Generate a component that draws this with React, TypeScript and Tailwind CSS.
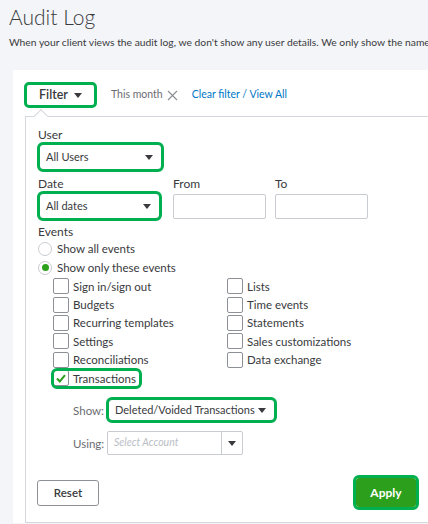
import React from 'react';

const font = { fontFamily: 'Lato, "Noto Sans", "Liberation Sans", sans-serif' };

// little filled down-arrow used by the select boxes
function Caret({ className = '' }: { className?: string }) {
  return (
    <svg width="8" height="5" viewBox="0 0 8 5" className={className}>
      <path d="M0 0 L8 0 L4 5 Z" fill="#393a3d" />
    </svg>
  );
}

function Select({ label, width, height }: { label: string; width: string; height: string }) {
  return (
    <div
      className={`flex items-center justify-between rounded-[4px] border border-[#babec5] bg-white pl-[6px] pr-[8px] outline-[3px] outline-[#00b050] outline-offset-[-1px] outline ${width} ${height}`}
    >
      <span className="whitespace-nowrap text-[11px] text-[#393a3d]">{label}</span>
      <Caret />
    </div>
  );
}

function Checkbox({ label, checked = false, highlight = false }: { label: string; checked?: boolean; highlight?: boolean }) {
  return (
    <div className="flex h-[18.4px] items-center">
      <div
        className={`flex items-center gap-[4px] pr-[4px] ${highlight ? 'rounded-[4px] outline outline-[3px] outline-[#00b050] outline-offset-[-1px]' : ''}`}
      >
        <span className="flex h-[16px] w-[16px] items-center justify-center rounded-[2px] border border-[#8d9096] bg-white">
          {checked && (
            <svg width="10" height="9" viewBox="0 0 10 9">
              <path d="M1 4.5 L3.8 7.4 L9 1.2" fill="none" stroke="#2ca01c" strokeWidth="2" />
            </svg>
          )}
        </span>
        <span className="text-[11.5px] text-[#393a3d]">{label}</span>
      </div>
    </div>
  );
}

function Radio({ label, checked = false }: { label: string; checked?: boolean }) {
  return (
    <div className="flex h-[19px] items-center gap-[5px]">
      <span className="flex h-[14px] w-[14px] items-center justify-center rounded-full border border-[#c8cbd0] bg-white">
        {checked && <span className="h-[7px] w-[7px] rounded-full bg-[#2ca01c]" />}
      </span>
      <span className="text-[11.5px] text-[#393a3d]">{label}</span>
    </div>
  );
}

const leftEvents = ['Sign in/sign out', 'Budgets', 'Recurring templates', 'Settings', 'Reconciliations'];
const rightEvents = ['Lists', 'Time events', 'Statements', 'Sales customizations', 'Data exchange'];

export default function App() {
  return (
    <div className="flex h-[524px] w-[428px] flex-col overflow-hidden bg-[#f4f5f8]" style={font}>
      <div className="pl-[9px] pt-[3px]">
        <h1 className="text-[21px] font-light leading-[28px] text-[#393a3d]">Audit Log</h1>
        <p className="mt-[4px] whitespace-nowrap text-[10.3px] leading-[14px] text-[#393a3d]">
          When your client views the audit log, we don't show any user details. We only show the name of the firm.
        </p>
      </div>

      <div className="ml-[13px] mt-[21px] w-[440px] bg-white pt-[12px]">
        {/* filter bar */}
        <div className="flex items-center pl-[11px]">
          <button className="flex h-[26px] w-[73px] items-center justify-center gap-[6px] rounded-[5px] border-[3px] border-[#00b050] bg-white">
            <span className="text-[12.5px] font-semibold text-[#393a3d]">Filter</span>
            <Caret />
          </button>
          <span className="ml-[14px] text-[10.5px] text-[#6b6c72]">This month</span>
          <svg width="11" height="11" viewBox="0 0 11 11" className="ml-[4px]">
            <path d="M1 1 L10 10 M10 1 L1 10" stroke="#8d9096" strokeWidth="1.2" />
          </svg>
          <span className="ml-[14px] text-[10.5px] text-[#0077c5]">Clear filter / View All</span>
        </div>

        {/* dropdown panel */}
        <div className="relative ml-[12px] mt-[8px] border border-[#d4d7dc] bg-white pb-[15px] pl-[12px] pt-[10px]">
          <span className="absolute left-[10px] top-[-6px] h-[10px] w-[10px] rotate-45 border-l border-t border-[#d4d7dc] bg-white" />

          <div className="text-[12px] leading-[16px] text-[#393a3d]">User</div>
          <div className="ml-[1px] mt-[1px]">
            <Select label="All Users" width="w-[123px]" height="h-[26px]" />
          </div>

          <div className="mt-[6px] flex">
            <div className="flex flex-col">
              <span className="text-[12px] leading-[16px] text-[#393a3d]">Date</span>
              <div className="ml-[1px] mt-[1px]">
                <Select label="All dates" width="w-[121px]" height="h-[26px]" />
              </div>
            </div>
            <div className="ml-[13px] flex flex-col">
              <span className="text-[12px] leading-[16px] text-[#393a3d]">From</span>
              <div className="mt-[2px] h-[25px] w-[93px] rounded-[2px] border border-[#c8cbd0]" />
            </div>
            <div className="ml-[9px] flex flex-col">
              <span className="text-[12px] leading-[16px] text-[#393a3d]">To</span>
              <div className="mt-[2px] h-[25px] w-[93px] rounded-[2px] border border-[#c8cbd0]" />
            </div>
          </div>

          <div className="mt-[5px] text-[12px] leading-[16px] text-[#393a3d]">Events</div>
          <div className="-mt-[1px]">
            <Radio label="Show all events" />
            <Radio label="Show only these events" checked />
          </div>

          <div className="flex pl-[15px]">
            <div className="flex w-[174px] flex-col">
              {leftEvents.map((e) => (
                <Checkbox key={e} label={e} />
              ))}
              <Checkbox label="Transactions" checked highlight />
            </div>
            <div className="flex flex-col">
              {rightEvents.map((e) => (
                <Checkbox key={e} label={e} />
              ))}
            </div>
          </div>

          <div className="mt-[12px] flex items-center pl-[35px]">
            <span className="w-[31px] text-right text-[11.5px] text-[#6b6c72]">Show:</span>
            <div className="ml-[4px]">
              <Select label="Deleted/Voided Transactions" width="w-[167px]" height="h-[22px]" />
            </div>
          </div>

          <div className="mt-[10px] flex items-center pl-[35px]">
            <span className="w-[31px] text-right text-[11.5px] text-[#6b6c72]">Using:</span>
            <div className="ml-[3px] flex h-[24px] w-[136px] rounded-[2px] border border-[#c8cbd0]">
              <span className="flex flex-1 items-center pl-[6px] text-[10.5px] italic text-[#babec5]">Select Account</span>
              <span className="flex w-[21px] items-center justify-center border-l border-[#c8cbd0]">
                <Caret />
              </span>
            </div>
          </div>

          <div className="ml-[-1px] mt-[23px] flex w-[379px] items-center">
            <button className="h-[26px] w-[62px] rounded-[3px] border border-[#8d9096] bg-white text-[11.5px] font-semibold text-[#393a3d]">
              Reset
            </button>
            <button className="ml-auto h-[29px] w-[60px] rounded-[3px] bg-[#2ca01c] text-[12px] font-bold text-white outline outline-[3px] outline-[#00b050] outline-offset-[0px]">
              Apply
            </button>
          </div>
        </div>
      </div>
    </div>
  );
}
